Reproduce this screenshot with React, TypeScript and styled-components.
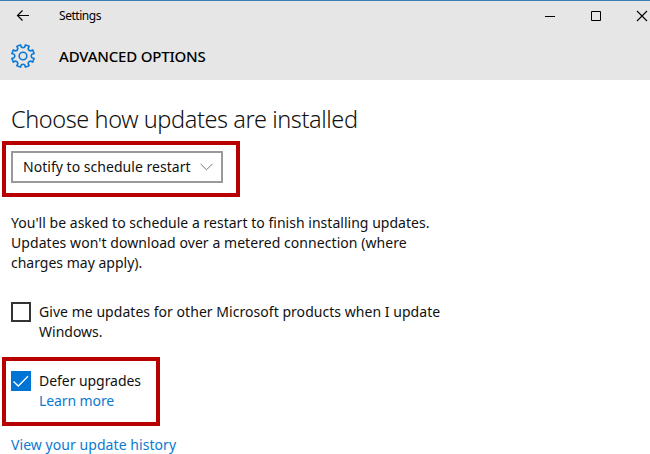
import React from "react";
import styled, { createGlobalStyle } from "styled-components";

const GlobalStyle = createGlobalStyle`
  * { box-sizing: border-box; }
  body {
    margin: 0;
    background: #fff;
    color: #111;
    font-family: "Noto Sans", "Open Sans", sans-serif;
    font-size: 14px;
    line-height: 20px;
    overflow: hidden;
  }
`;

const Window = styled.div`
  width: 650px;
  height: 454px;
  overflow: hidden;
  background: #fff;
`;

const Header = styled.header`
  height: 80px;
  background: #e6e6e6;
  border-top: 1px solid #3d7fb0;
  color: #000;
`;

const TitleBar = styled.div`
  height: 30px;
  display: flex;
  align-items: center;
  padding-left: 16px;
`;

const BackButton = styled.button`
  width: 43px;
  height: 30px;
  padding: 0;
  border: 0;
  background: none;
  display: flex;
  align-items: center;
`;

const WindowControls = styled.div`
  margin-left: auto;
  display: flex;
  gap: 34px;
  width: 106px;
  flex: none;
`;

const ControlIcon = styled.svg`
  width: 12px;
  height: 12px;
  flex: none;
`;

const PageBar = styled.div`
  display: flex;
  align-items: center;
  height: 49px;
  padding: 0 0 0 11px;
`;

const GearIcon = styled.svg`
  width: 24px;
  height: 24px;
  margin-right: 24px;
  margin-top: 1px;
`;

const Line = styled.span<{ $spacing?: number; $size?: number; $weight?: number }>`
  display: block;
  white-space: nowrap;
  letter-spacing: ${(p) => p.$spacing ?? 0}px;
  font-size: ${(p) => p.$size ?? 14}px;
  font-weight: ${(p) => p.$weight ?? 400};
`;

const Content = styled.main`
  padding: 23px 0 0 2px;
  display: flex;
  flex-direction: column;
  align-items: flex-start;
`;

const Heading = styled.h1`
  margin: 0 0 6px 9px;
  height: 32px;
  line-height: 32px;
`;

const Highlight = styled.section<{ $width: number; $height: number; $top?: number }>`
  width: ${(p) => p.$width}px;
  height: ${(p) => p.$height}px;
  border: 4px solid #b90000;
  padding: ${(p) => p.$top ?? 6}px 5px 0;
`;

const Select = styled.button`
  width: 212px;
  height: 32px;
  border: 2px solid #999;
  background: #fff;
  padding: 0 8px 0 10px;
  display: flex;
  align-items: center;
  justify-content: space-between;
  font: inherit;
  color: inherit;
`;

const Description = styled.p`
  margin: 16px 0 29px 9px;
`;

const Option = styled.label<{ $indent?: number }>`
  display: flex;
  align-items: flex-start;
  gap: 8px;
  margin-left: ${(p) => p.$indent ?? 0}px;
`;

const CheckBox = styled.span<{ $checked?: boolean }>`
  width: 20px;
  height: 20px;
  flex: none;
  border: 2px solid ${(p) => (p.$checked ? "#0074d4" : "#333")};
  background: ${(p) => (p.$checked ? "#0074d4" : "#fff")};
  display: flex;
`;

const OptionGap = styled.div`
  height: 15px;
`;

const Link = styled.a`
  color: #0c79d0;
`;

const HistoryLink = styled(Link)`
  margin: 9px 0 0 9px;
`;

const gearPath = (() => {
  const teeth = 8;
  const step = (Math.PI * 2) / teeth;
  const at = (a: number, r: number) =>
    `${(12 + r * Math.cos(a)).toFixed(2)} ${(12 + r * Math.sin(a)).toFixed(2)}`;
  let d = "";
  for (let i = 0; i < teeth; i++) {
    const mid = i * step + step / 2;
    d += `${i === 0 ? "M" : "L"}${at(mid - 0.21, 9)}L${at(mid - 0.17, 11.4)}`;
    d += `L${at(mid + 0.17, 11.4)}L${at(mid + 0.21, 9)}`;
    d += `Q${at(mid + step / 2, 7.6)} ${at(mid + step - 0.21, 9)}`;
  }
  return `${d}Z`;
})();

export default function App() {
  return (
    <Window>
      <GlobalStyle />
      <Header>
        <TitleBar>
          <BackButton aria-label="Back">
            <svg width="14" height="12" viewBox="0 0 14 12" fill="none" stroke="#000" strokeWidth="1.2">
              <path d="M13 5.5H1.5M6.5 0.5L1.5 5.5L6.5 10.5" />
            </svg>
          </BackButton>
          <Line $size={12} $spacing={-0.45}>Settings</Line>
          <WindowControls>
            <ControlIcon viewBox="0 0 12 12" fill="none" stroke="#000">
              <path d="M1 6.5H11" />
            </ControlIcon>
            <ControlIcon viewBox="0 0 12 12" fill="none" stroke="#000">
              <path d="M1.5 1.5H10.5V10.5H1.5Z" />
            </ControlIcon>
            <ControlIcon viewBox="0 0 12 12" fill="none" stroke="#000" strokeWidth="1.1">
              <path d="M1 1L11 11M11 1L1 11" />
            </ControlIcon>
          </WindowControls>
        </TitleBar>
        <PageBar>
          <GearIcon viewBox="0 0 24 24" fill="none" stroke="#0c79d6" strokeWidth="1.6" strokeLinejoin="round">
            <path d={gearPath} />
            <circle cx="12" cy="12" r="3.8" />
          </GearIcon>
          <Line $size={15} $weight={500} $spacing={-0.2}>ADVANCED OPTIONS</Line>
        </PageBar>
      </Header>
      <Content>
        <Heading>
          <Line $size={23.5} $weight={350} $spacing={-0.41}>Choose how updates are installed</Line>
        </Heading>
        <Highlight $width={238} $height={56}>
          <Select>
            <Line $spacing={0.03}>Notify to schedule restart</Line>
            <svg width="13" height="8" viewBox="0 0 13 8" fill="none" stroke="#777">
              <path d="M0.7 1L6.5 6.8L12.3 1" />
            </svg>
          </Select>
        </Highlight>
        <Description>
          <Line $spacing={0.025}>You'll be asked to schedule a restart to finish installing updates.</Line>
          <Line $spacing={0.06}>Updates won't download over a metered connection (where</Line>
          <Line>charges may apply).</Line>
        </Description>
        <Option $indent={9}>
          <CheckBox />
          <span>
            <Line $spacing={0.04}>Give me updates for other Microsoft products when I update</Line>
            <Line>Windows.</Line>
          </span>
        </Option>
        <OptionGap />
        <Highlight $width={158} $height={69} $top={10}>
          <Option>
            <CheckBox $checked>
              <svg width="16" height="16" viewBox="0 0 16 16" fill="none" stroke="#fff" strokeWidth="1.3">
                <path d="M0.5 8.5L5.3 13L15 3.3" />
              </svg>
            </CheckBox>
            <span>
              <Line $spacing={-0.05}>Defer upgrades</Line>
              <Link><Line $spacing={-0.1}>Learn more</Line></Link>
            </span>
          </Option>
        </Highlight>
        <HistoryLink><Line $spacing={0.06}>View your update history</Line></HistoryLink>
      </Content>
    </Window>
  );
}
